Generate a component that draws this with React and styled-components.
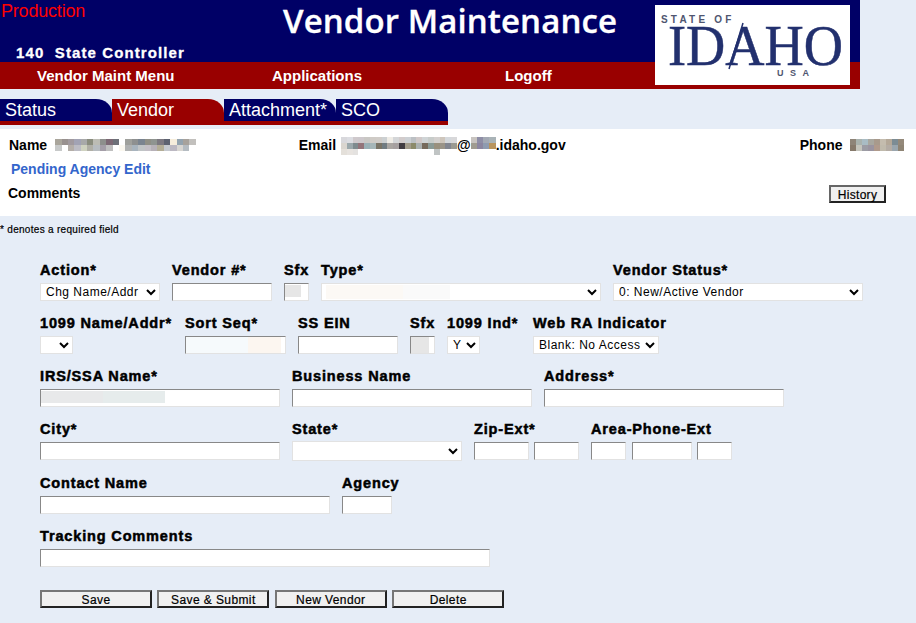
import React from 'react';
import styled, { createGlobalStyle } from 'styled-components';

const GlobalStyle = createGlobalStyle`
  html, body {
    margin: 0;
    padding: 0;
    background: #e6edf7;
    font-family: "Liberation Sans", Arial, sans-serif;
  }
`;

const Page = styled.div`
  width: 916px;
  height: 623px;
  overflow: hidden;
`;

const Banner = styled.header`
  position: relative;
  width: 860px;
  height: 89px;
`;

const TopBand = styled.div`
  height: 62px;
  background: #000066;
  color: #fff;
  position: relative;
`;

const Env = styled.div`
  position: absolute;
  left: 1px;
  top: 1px;
  color: #ff0000;
  font: 18px/20px "Liberation Sans", sans-serif;
  letter-spacing: -0.2px;
`;

const Title = styled.h1`
  position: absolute;
  left: 283px;
  top: -2px;
  margin: 0;
  font: 600 33px/46px "Open Sans", sans-serif;
  letter-spacing: 0.1px;
  -webkit-text-stroke: 0.3px #fff;
`;

const Agency = styled.div`
  position: absolute;
  left: 16px;
  top: 44px;
  font: bold 15px/17px "Liberation Sans", sans-serif;
  letter-spacing: 1.1px;
  -webkit-text-stroke: 0.3px #fff;
  white-space: pre;
`;

const MenuBand = styled.nav`
  height: 27px;
  background: #990000;
  position: relative;
`;

const MenuLink = styled.a`
  position: absolute;
  left: ${p => p.$x}px;
  top: 5px;
  color: #fff;
  font: bold 15px/17px "Liberation Sans", sans-serif;
`;

const Logo = styled.div`
  position: absolute;
  left: 655px;
  top: 5px;
  width: 195px;
  height: 80px;
  background: #fff;
`;

const TabBar = styled.div`
  display: flex;
  width: 448px;
  margin-top: 10px;
  border-bottom: 4px solid #990000;
`;

const Tab = styled.div`
  width: 112px;
  height: 22px;
  box-sizing: border-box;
  padding-left: 5px;
  background: ${p => (p.$active ? '#990000' : '#000066')};
  color: #fff;
  font-size: 18px;
  line-height: 22px;
  border-top-right-radius: 16px 14px;
  white-space: nowrap;
`;

const Info = styled.section`
  margin-top: 4px;
  height: 87px;
  background: #fff;
  position: relative;
`;

const InfoRow = styled.div`
  display: flex;
  align-items: center;
  height: 16px;
  font: bold 14px/16px "Liberation Sans", sans-serif;
  color: #000;
`;

const TopRow = styled(InfoRow)`
  padding-top: 8px;
`;

const Field = styled.div`
  display: flex;
  align-items: center;
  white-space: nowrap;
  margin-left: ${p => p.$left}px;
`;

const Pending = styled(InfoRow)`
  margin: 8px 0 0 11px;
  color: #3366cc;
`;

const CommentsRow = styled(InfoRow)`
  margin: 8px 0 0 8px;
`;

const Mosaic = styled.span`
  display: inline-grid;
  grid-template-columns: repeat(${p => p.$cols}, ${p => p.$size ?? 6}px);
  grid-auto-rows: 6px;
  margin-left: ${p => p.$gap}px;
  align-self: flex-start;
  margin-top: 2px;
`;

const Cell = styled.i`
  display: block;
  background: ${p => p.$c};
`;

const HistoryButton = styled.button`
  position: absolute;
  left: 829px;
  top: 56px;
  width: 57px;
  height: 18px;
  padding: 1px 0 0;
  background: #f0f0f0;
  border: 2px solid;
  border-color: #666 #222 #222 #666;
  font: 12px "Liberation Sans", sans-serif;
  letter-spacing: 0.3px;
  -webkit-text-stroke: 0.2px #000;
  color: #000;
`;

const Note = styled.div`
  margin-top: 8px;
  font: 10px/12px "Liberation Sans", sans-serif;
  -webkit-text-stroke: 0.2px #000;
  letter-spacing: 0.3px;
`;

const Form = styled.form`
  margin: 27px 0 0 40px;
`;

const Row = styled.div`
  display: flex;
  gap: 12px;
  margin-bottom: 15px;
`;

const Group = styled.div`
  display: flex;
  flex-direction: column;
  width: ${p => (p.$w ? `${p.$w}px` : 'auto')};
`;

const Label = styled.label`
  font: bold 14.5px/14px "Liberation Sans", sans-serif;
  padding-bottom: 6px;
  letter-spacing: 0.85px;
  -webkit-text-stroke: 0.5px #000;
  color: #000;
  white-space: nowrap;
`;

const Inputs = styled.div`
  display: flex;
  gap: ${p => p.$gap ?? 5}px;
`;

const TextBox = styled.input`
  box-sizing: border-box;
  width: ${p => p.$w}px;
  height: 18px;
  padding: 0;
  background: ${p => p.$patch || '#fff'};
  border: 1px solid;
  border-color: #888 #e2e2e2 #e2e2e2 #888;
`;

const Dropdown = styled.select`
  box-sizing: border-box;
  width: ${p => p.$w}px;
  height: ${p => (p.$tall ? 20 : 18)}px;
  margin-top: ${p => (p.$tall ? -1 : 0)}px;
  padding: 0 0 0 1px;
  background: ${p => p.$patch || '#fff'};
  border: 1px solid #e2e2e2;
  border-radius: 0;
  font: 12px "Liberation Sans", sans-serif;
  letter-spacing: 0.5px;
  color: #000;
`;

const Buttons = styled.div`
  display: flex;
  gap: 5.4px;
  margin-top: 23px;
`;

const ActionButton = styled.button`
  box-sizing: border-box;
  width: 112px;
  height: 18px;
  padding: 1px 0 0;
  background: #f0f0f0;
  border: 2px solid;
  border-color: #767676 #222 #222 #767676;
  font: 12px "Liberation Sans", sans-serif;
  letter-spacing: 0.4px;
  -webkit-text-stroke: 0.2px #000;
  color: #000;
`;

const nameCells = ['#a9a59b','#98918f','#a19a9f','#a2a3b4','#a8a9a9','#8a8d7e','#bcbcb4','#8d8f8c','#7c6874','#6d7078','#fff','#9fa09c','#8e9090','#7a8490','#8f8f86','#8f9490','#7c7880','#5d6270','#f6eddc','#93a3af','#a7a29c','#c2c0bd',
  '#c7c9c9','#fff','#b4aea8','#bcbcc4','#cfd2c0','#b0afa6','#b7bcc0','#a49ea8','#bfbfbf','#fff','#fbf8f0','#b0b2b2','#a8b4be','#c0c4c6','#c3bfc6','#b7b1b8','#b3ad96','#c5c9cf','#bcb8c2','#d8d6d2','#b5bcc2','#fff'];
const emailCells = ['#d8d8dc','#dcdde2','#cfc9cc','#cdc8cc','#c9c7c4','#cfcbc6','#d0ccc8','#ccd0d2','#efece6','#d4d6d8','#d2cccc','#ccd0d4','#bcc0c4','#d0c8c8','#cfd4d6','#c8ccca','#d3d0ce','#cec6bc','#d4d8dc','#d8d8da',
  '#d9d5cf','#9ba8ac','#7e8b8f','#93747a','#9ab0b6','#a6b6b8','#7a7466','#717c82','#aaa6a2','#a6a0a0','#413c42','#a39c8c','#8c8a6a','#aab0b0','#766a5c','#8a9a96','#99907e','#9a9488','#828690','#9a9a92',
  '#e4e0da','#e8e4e0','#e4e2e0','transparent','transparent','transparent','transparent','transparent','transparent','transparent','transparent','transparent','transparent','transparent','transparent','transparent','#c0c4c4','transparent','transparent','transparent'];
const emailTail = ['#c8c4c0','#8e8ea6','#a3a9b4','#a9b3b7','#a09c90','#8b86a0','#8e9bb0','#b8945e'];
const phoneCells = ['#8e8478','#a9b2ae','#a9bcc4','#a8a79f','#a89a8c','#c4bcae','#b4a898','#7c8c94','#94897a',
  '#86796b','#c4c4bc','#9c9ca4','#9a94a0','#b09a8c','#c0baac','#b4aca4','#9aa6ae','#8e8474'];

const IdahoLogo = () => (
  <svg width="195" height="80" viewBox="0 0 195 80" fontFamily="'Liberation Serif', serif" fill="#22306e">
    <text x="6" y="18" fontFamily="'Liberation Sans', sans-serif" fontWeight="bold" fontSize="10" letterSpacing="3.2" fill="#4f5670">STATE OF</text>
    <text x="13" y="60" fontSize="57" textLength="175" lengthAdjust="spacingAndGlyphs" stroke="#22306e" strokeWidth="0.5">IDAHO</text>
    <line x1="88" y1="18" x2="74" y2="64" stroke="#22306e" strokeWidth="1.5" />
    <text x="122" y="71" fontFamily="'Liberation Sans', sans-serif" fontWeight="bold" fontSize="9" letterSpacing="6.5" fill="#4f5670">USA</text>
  </svg>
);

const App = () => (
  <Page>
    <GlobalStyle />
    <Banner>
      <TopBand>
        <Env>Production</Env>
        <Title>Vendor Maintenance</Title>
        <Agency>140  State Controller</Agency>
      </TopBand>
      <MenuBand>
        <MenuLink $x={37}>Vendor Maint Menu</MenuLink>
        <MenuLink $x={272}>Applications</MenuLink>
        <MenuLink $x={505}>Logoff</MenuLink>
      </MenuBand>
      <Logo><IdahoLogo /></Logo>
    </Banner>

    <TabBar>
      <Tab>Status</Tab>
      <Tab $active>Vendor</Tab>
      <Tab>Attachment*</Tab>
      <Tab>SCO</Tab>
    </TabBar>

    <Info>
      <TopRow>
        <Field $left={9}>
          Name
          <Mosaic $cols={22} $size={6.4} $gap={8}>{nameCells.map((c, i) => <Cell key={i} $c={c} />)}</Mosaic>
        </Field>
        <Field $left={103}>
          Email
          <Mosaic $cols={20} $size={5.8} $gap={5}>{emailCells.map((c, i) => <Cell key={i} $c={c} />)}</Mosaic>
          @
          <Mosaic $cols={4} $size={6.25} $gap={0}>{emailTail.map((c, i) => <Cell key={i} $c={c} />)}</Mosaic>
          .idaho.gov
        </Field>
        <Field $left={234}>
          Phone
          <Mosaic $cols={9} $gap={8}>{phoneCells.map((c, i) => <Cell key={i} $c={c} />)}</Mosaic>
        </Field>
      </TopRow>
      <Pending>Pending Agency Edit</Pending>
      <CommentsRow>Comments</CommentsRow>
      <HistoryButton type="button">History</HistoryButton>
    </Info>

    <Note>* denotes a required field</Note>

    <Form>
      <Row>
        <Group $w={120}><Label>Action*</Label><Dropdown $w={120}><option>Chg Name/Addr</option></Dropdown></Group>
        <Group $w={100}><Label>Vendor #*</Label><TextBox $w={100} /></Group>
        <Group $w={25}><Label>Sfx</Label><TextBox $w={25} $patch="linear-gradient(#e6e6e6,#e6e6e6) 0 1px / 16px 12px no-repeat #fff" /></Group>
        <Group $w={280}><Label>Type*</Label><Dropdown $w={280} $patch="linear-gradient(90deg,#fcf9f5 62%,#fafafa 62%) 4px 1px / 124px 14px no-repeat #fff"><option></option></Dropdown></Group>
        <Group $w={250}><Label>Vendor Status*</Label><Dropdown $w={250}><option>0: New/Active Vendor</option></Dropdown></Group>
      </Row>
      <Row>
        <Group $w={133}><Label>1099 Name/Addr*</Label><Dropdown $w={33}><option></option></Dropdown></Group>
        <Group $w={101}><Label>Sort Seq*</Label><TextBox $w={101} $patch="linear-gradient(90deg,#f6fafc 62px,#fcf6f0 62px) 0 0 / 95px 100% no-repeat #fff" /></Group>
        <Group $w={100}><Label>SS EIN</Label><TextBox $w={100} /></Group>
        <Group $w={25}><Label>Sfx</Label><TextBox $w={25} $patch="linear-gradient(#e6e6e6,#e6e6e6) 0 0 / 18px 100% no-repeat #fff" /></Group>
        <Group $w={74}><Label>1099 Ind*</Label><Dropdown $w={33}><option>Y</option></Dropdown></Group>
        <Group $w={126}><Label>Web RA Indicator</Label><Dropdown $w={126}><option>Blank: No Access</option></Dropdown></Group>
      </Row>
      <Row>
        <Group $w={240}><Label>IRS/SSA Name*</Label><TextBox $w={240} $patch="linear-gradient(90deg,#e8e9ea 50%,#e6ecec 50%) 0 1px / 124px 12px no-repeat #fff" /></Group>
        <Group $w={240}><Label>Business Name</Label><TextBox $w={240} /></Group>
        <Group $w={240}><Label>Address*</Label><TextBox $w={240} /></Group>
      </Row>
      <Row>
        <Group $w={240}><Label>City*</Label><TextBox $w={240} /></Group>
        <Group $w={170}><Label>State*</Label><Dropdown $w={170} $tall><option></option></Dropdown></Group>
        <Group $w={105}><Label>Zip-Ext*</Label><Inputs><TextBox $w={55} /><TextBox $w={45} /></Inputs></Group>
        <Group><Label>Area-Phone-Ext</Label><Inputs $gap={5.5}><TextBox $w={35} /><TextBox $w={60} /><TextBox $w={35} /></Inputs></Group>
      </Row>
      <Row>
        <Group $w={290}><Label>Contact Name</Label><TextBox $w={290} /></Group>
        <Group $w={50}><Label>Agency</Label><TextBox $w={50} /></Group>
      </Row>
      <Row>
        <Group $w={450}><Label>Tracking Comments</Label><TextBox $w={450} /></Group>
      </Row>
      <Buttons>
        <ActionButton type="button">Save</ActionButton>
        <ActionButton type="button">Save &amp; Submit</ActionButton>
        <ActionButton type="button">New Vendor</ActionButton>
        <ActionButton type="button">Delete</ActionButton>
      </Buttons>
    </Form>
  </Page>
);

export default App;
